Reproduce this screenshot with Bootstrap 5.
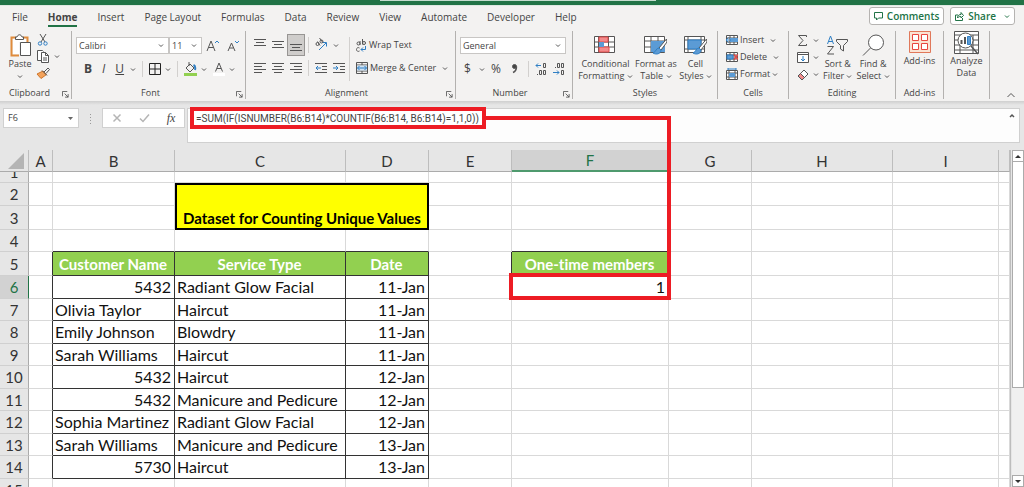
<!DOCTYPE html>
<html lang="en">
<head>
<meta charset="utf-8">
<meta name="viewport" content="width=device-width, initial-scale=1">
<title>Counting Unique Values</title>
<link rel="stylesheet" href="https://cdn.jsdelivr.net/npm/bootstrap@5.3.0/dist/css/bootstrap.min.css">
<style>
:root{--xl-green:#217346;--ink:#444;--line:#d9d9d9;--red:#ed1c24}
body{font-family:"Open Sans","Noto Sans",sans-serif;font-size:9px;line-height:12px;color:var(--ink);background:#e6e6e6;overflow:hidden}
button,input{font:inherit;color:inherit}
svg{display:block;flex:none;fill:none;stroke:#555;stroke-width:1}
.title-strip{height:5px;background:var(--xl-green);overflow:hidden}
.title-strip .search{width:276px;height:1px;margin-left:380px;background:#c5dccf}
.tabs-row{height:25px;background:#f3f2f1;padding:0 9px 0 12px;border-top:1px solid #dfe8e2}
.tabs-row .nav-link{font-size:10px;line-height:16px;color:var(--ink);padding:3px 0 0}
.tabs-row .nav-link.active{font-weight:700;border-bottom:2px solid var(--xl-green)}
.tabs-row .nav{gap:20px}
.pills{gap:6px;padding-top:1px}
.pill{height:18px;background:#fff;border:1px solid #b5b3b1;border-radius:3px;color:var(--xl-green);font-size:10px;font-weight:600;padding:0 4px}
.pill svg{stroke:var(--xl-green)}
.ribbon{height:71px;background:#f3f2f1}
.grp{height:68px;margin-top:1px;border-right:1px solid #b3b1af;flex:none;position:relative}
.grp .cap{height:12px;text-align:center}
.grp .launch{position:absolute;right:2px;bottom:1px}
.w-clip{width:72px}.w-font{width:174px}.w-align{width:210px}.w-num{width:117px}.w-styles{width:145px}.w-cells{width:71px}.w-edit{width:107px}.w-add{width:48px}.w-an{width:46px}
.top-s{padding-top:3px}
.rows3{display:flex;flex-direction:column;gap:5px}
.stack{display:flex;flex-direction:column;gap:7px;padding-top:6px}
.line{display:flex;align-items:center;gap:6px}
.stack .tool{min-height:16px}
.tool{background:none;border:0;padding:0;display:flex;align-items:center;gap:4px;white-space:nowrap}
.tool.tight{gap:2px}
.tool.big{flex-direction:column;gap:0}
.tool.big>svg:first-child{height:24px}
.tool.on{background:#cfcdcb;box-shadow:0 0 0 2px #cfcdcb,0 0 0 3px #979593}
.caret{display:inline-block;stroke:#555}
.field{background:#fff;border:1px solid #c8c6c4;height:17px}
.field input{border:0;padding:0 2px;width:100%;min-width:0;background:none;outline:0}
.f-name{width:93px}.f-size{width:33px}.f-num{width:106px}
.vr-l{width:1px;height:16px;background:#d2d0ce}
.vr-l.long{height:44px;margin:6px 6px 0 4px}
.glyph{font-size:12px;line-height:16px}
.under-ribbon{height:4px;background:linear-gradient(#cfcfcf,#e6e6e6)}
.fbar{height:34px;margin:3px 4px 8px 3px}
.fbox{height:20px;background:#fff;border:1px solid #d0d0d0}
.n-box{width:76px}.fx-box{width:83px}
.fx{font-family:"Liberation Serif",serif;font-size:12px}
.fedit{height:35px;background:#fdfdfd;border:1px solid #d0d0d0;margin-left:2px}
.formula{font-family:Roboto,sans-serif;font-size:10px;height:22px;width:296px;border:4px solid var(--red);margin:-2px 0 0 2px;padding:0 2px;background:#fff;color:#444;outline:0}
.grid{table-layout:fixed;width:100%;border-collapse:separate;border-spacing:0;font-family:Lato,"Open Sans",sans-serif;font-variant-ligatures:none;font-size:16px;line-height:20px;color:#111}
.grid td,.grid th{padding:0 3px 0 2px;border-right:1px solid var(--line);border-bottom:1px solid var(--line);white-space:nowrap;overflow:hidden;vertical-align:bottom;background:#fff}
.grid td{padding-bottom:1px}
.grid thead th,.grid tbody th{background:#e6e6e6;font-size:15px;font-weight:400;text-align:center;vertical-align:middle;color:#333;padding:0;line-height:18px}
.grid thead th{height:22px;border-right-color:#bdbdbd;border-bottom-color:#ababab}
.grid tbody th{border-right-color:#ababab;border-bottom-color:#d0d0d0}
.grid thead th.sel{background:#d2d2d2;color:var(--xl-green);border-bottom:2px solid #4f9a6e}
.grid tbody th.sel{background:#d2d2d2;color:var(--xl-green);border-right-color:var(--xl-green)}
.grid tbody tr{height:23px}
.grid tbody tr.short{height:22px}
.grid tbody tr.short td{line-height:20px;padding-bottom:0}
.grid tbody tr.tall{height:24px}
.grid tbody tr.cut{height:11px}
.cut th div{height:10px;line-height:1px;overflow:hidden}
.grid td.k{border-right-color:#333;border-bottom-color:#333}
.grid td.kr{border-right-color:#333}
.grid td.kb{border-bottom-color:#333}
.grid td.hd{background:#92d050;color:#fff;font-size:15px;font-weight:700;text-align:center}
.grid td.ttl{background:#ff0;border:2px solid #000;font-size:15px;font-weight:700;text-align:center;padding:0;color:#000}
.c-head{width:29px}.c-a{width:24px}.c-b{width:122px}.c-c{width:171px}.c-s{width:83px}.c-f{width:157px}.c-h{width:141px}.c-i{width:106px}
.scrollcol{width:16px;border-left:1px solid #bdbdbd;padding-left:1px}
.sb{width:12px;border:1px solid #ababab;background:#fff;height:12px;padding:0}
.sb.thumb{height:226px;border-top:0}
.track{width:12px;background:#f0f0f0}
.link-line{position:absolute;left:485px;top:116px;width:186px;height:159px;border:solid var(--red);border-width:4px 4px 0 0;pointer-events:none}
.cell-box{position:absolute;left:509px;top:273px;width:162px;height:27px;border:4px solid var(--red);pointer-events:none}
</style>
<script src="https://cdn.jsdelivr.net/npm/bootstrap@5.3.0/dist/js/bootstrap.bundle.min.js"></script>
</head>
<body class="vh-100 d-flex flex-column position-relative">
<svg width="0" height="0" class="position-absolute">
<symbol id="cv" viewBox="0 0 6 5"><path d="M1 1.5l2 2 2-2"/></symbol>
<symbol id="ln" viewBox="0 0 8 8"><path d="M.5 6V.5H6M3 3l4 4M7 3.5V7H3.5"/></symbol>
<symbol id="brush" viewBox="0 0 16 18"><path d="M15.5 1L8 10l2 2 6-8z" fill="#fff"/><path d="M8 10c-3 0-3 4-6 5 3 2 8 1 8-3z" fill="#5b9bd5" stroke="#2f7fc4"/></symbol>
</svg>

<header>
<div class="title-strip"><div class="search"></div></div>
<div class="tabs-row d-flex justify-content-between align-items-start">
<nav class="nav flex-nowrap text-nowrap">
<a class="nav-link" href="#">File</a><a class="nav-link active" href="#">Home</a><a class="nav-link" href="#">Insert</a><a class="nav-link" href="#">Page Layout</a><a class="nav-link" href="#">Formulas</a><a class="nav-link" href="#">Data</a><a class="nav-link" href="#">Review</a><a class="nav-link" href="#">View</a><a class="nav-link" href="#">Automate</a><a class="nav-link" href="#">Developer</a><a class="nav-link" href="#">Help</a>
</nav>
<div class="pills d-flex text-nowrap">
<button class="pill d-flex align-items-center gap-1"><svg width="9" height="9"><path d="M.5.5h8v5.500h-4l-2 2v-2h-2z"/></svg>Comments</button>
<button class="pill d-flex align-items-center gap-1"><svg width="9" height="9"><path d="M3 3H.5v5.500h7V6M2.500 6c0-3 2-3.500 3.500-3.500V.5l2.500 3L6 6V4.500C5 4.500 3.500 4.500 2.500 6z"/></svg>Share<svg class="ms-1" width="6" height="5"><use href="#cv"/></svg></button>
</div>
</div>

<div class="ribbon d-flex">
<section class="grp w-clip d-flex flex-column justify-content-between">
<div class="d-flex ps-2 gap-1 top-s">
<button class="tool big"><svg width="24" height="24"><path d="M8 3.500H3.500v18H11M15 3.500h4.500V8" stroke="#e08b3c" stroke-width="2"/><path d="M5 5h13v3h-7v12H5z" fill="#fff" stroke="none"/><path d="M7.500 5.500V3H9c1-3 4-3 5 0h1.500v2.500z" fill="#fff"/><path d="M12.500 8.500h10v13h-10z" fill="#fff"/></svg><span>Paste</span><svg class="mt-1" width="6" height="5"><use href="#cv"/></svg></button>
<div class="d-flex flex-column gap-1">
<button class="tool" aria-label="Cut"><svg width="14" height="12"><path d="M4 0l5 8M10 0L5 8"/><circle cx="4" cy="9.500" r="1.700" stroke="#2f7fc4"/><circle cx="9.500" cy="9.500" r="1.700" stroke="#2f7fc4"/></svg></button>
<button class="tool" aria-label="Copy"><svg width="14" height="13"><path d="M6 10.500H1.500V.5h5l1 1M5.500 2.500h4l3 3v7h-7z" fill="#fff"/><path d="M9.500 2.500v3h3M7 8h4M7 10h4"/></svg><svg width="6" height="5"><use href="#cv"/></svg></button>
<button class="tool" aria-label="Format painter"><svg width="14" height="12"><path d="M7 4l3.500 3.500L5 11.500 1 7z" fill="#f3a35c" stroke="#d0762a"/><path d="M6 3.500l5 5M8 5l4-4 1.500 1.500L10 6.500"/></svg></button>
</div></div>
<div class="cap pe-3 ps-1">Clipboard</div><svg class="launch" width="7" height="7"><use href="#ln"/></svg>
</section>

<section class="grp w-font d-flex flex-column justify-content-between">
<div class="stack ps-1">
<div class="d-flex align-items-center">
<div class="field f-name d-flex align-items-center pe-1"><input aria-label="Font" value="Calibri"><svg width="6" height="5"><use href="#cv"/></svg></div>
<div class="field f-size d-flex align-items-center pe-1"><input aria-label="Font size" value="11"><svg width="6" height="5"><use href="#cv"/></svg></div>
<button class="tool ps-1" aria-label="Grow font"><svg width="13" height="14"><path d="M1 12L5 2l4 10M2.500 8.500h5"/><path d="M9 4l2-2 2 2" stroke="#2f7fc4"/></svg></button>
<button class="tool ps-2" aria-label="Shrink font"><svg width="12" height="14"><path d="M1 12l3.500-8L8 12M2.500 9h4"/><path d="M8 2l2 2 2-2" stroke="#2f7fc4"/></svg></button>
</div>
<div class="line ps-2">
<button class="tool fw-bold glyph">B</button>
<button class="tool fst-italic glyph px-1">I</button>
<button class="tool text-decoration-underline glyph">U</button><svg width="6" height="5"><use href="#cv"/></svg>
<span class="vr-l"></span>
<button class="tool" aria-label="Borders"><svg width="12" height="12"><path d="M.5.5h11v11H.5zM6 0v12M0 6h12" stroke="#222"/></svg><svg width="6" height="5"><use href="#cv"/></svg></button>
<span class="vr-l"></span>
<button class="tool" aria-label="Fill colour"><svg width="13" height="14"><path d="M2 6l4-4 4 4-4 4zM5 0v4"/><path d="M9.500 3c2 1 2 3 1.500 5" stroke="#2f7fc4" stroke-width="2"/><path d="M0 12.500h13" stroke="#92d050" stroke-width="3"/></svg><svg width="6" height="5"><use href="#cv"/></svg></button>
<button class="tool" aria-label="Font colour"><svg width="12" height="14"><path d="M2.500 9.500L6 1l3.500 8.500M4 6.500h4"/><path d="M0 12.500h12" stroke="#fff" stroke-width="3"/></svg><svg width="6" height="5"><use href="#cv"/></svg></button>
</div></div>
<div class="cap pe-3">Font</div><svg class="launch" width="7" height="7"><use href="#ln"/></svg>
</section>

<section class="grp w-align d-flex flex-column justify-content-between">
<div class="d-flex ps-2">
<div class="stack">
<div class="line">
<button class="tool" aria-label="Top align"><svg width="12" height="16"><path d="M0 2.500h12M2 5.500h8M0 8.500h12"/></svg></button>
<button class="tool" aria-label="Middle align"><svg width="12" height="16"><path d="M0 4.500h12M2 7.500h8M0 10.500h12"/></svg></button>
<button class="tool on" aria-label="Bottom align"><svg width="12" height="16"><path d="M0 7.500h12M2 10.500h8M0 13.500h12"/></svg></button>
<span class="vr-l"></span>
<button class="tool" aria-label="Orientation"><svg width="14" height="14"><path d="M4 12l7-7M7.500 4.500H11.500v4" stroke="#2f7fc4"/><circle cx="2.500" cy="6" r="1.500"/><circle cx="6.500" cy="3.500" r="1.500"/><path d="M2.500 3.500l2.500 4M4.500 0l3 4"/></svg><svg width="6" height="5"><use href="#cv"/></svg></button>
</div>
<div class="line">
<button class="tool" aria-label="Align left"><svg width="12" height="12"><path d="M0 1.500h12M0 4.500h8M0 7.500h12M0 10.500h8"/></svg></button>
<button class="tool" aria-label="Centre"><svg width="12" height="12"><path d="M0 1.500h12M2 4.500h8M0 7.500h12M2 10.500h8"/></svg></button>
<button class="tool" aria-label="Align right"><svg width="12" height="12"><path d="M0 1.500h12M4 4.500h8M0 7.500h12M4 10.500h8"/></svg></button>
<span class="vr-l"></span>
<button class="tool" aria-label="Decrease indent"><svg width="12" height="12"><path d="M0 1.500h12M7 4.500h5M7 7.500h5M0 10.500h12"/><path d="M6 6H1M3 4L1 6l2 2" stroke="#2f7fc4"/></svg></button>
<button class="tool" aria-label="Increase indent"><svg width="12" height="12"><path d="M0 1.500h12M7 4.500h5M7 7.500h5M0 10.500h12"/><path d="M0 6h5M3 4l2 2-2 2" stroke="#2f7fc4"/></svg></button>
</div></div>
<span class="vr-l long"></span>
<div class="stack">
<button class="tool tight"><svg width="11" height="14"><path d="M4 3v4M9.500 5a1.500 1.500 0 1 1-3 0 1.500 1.500 0 1 1 3 0M6.500 1v5.500M4 5.500a1.500 1.500 0 1 1-3 0 1.500 1.500 0 1 1 3 0M3.500 10C2 9 .5 10 .5 11.500S2 14 3.500 13"/><path d="M9.500 8v3.500H5M7 9.500l-2 2 2 2" stroke="#2f7fc4"/></svg>Wrap Text</button>
<button class="tool tight"><svg width="12" height="12"><path d="M.5.5h11v11H.5zM0 3h12M0 9h12M6 0v3M6 9v3"/><path d="M1 3.500h10v5H1z" fill="#cfe3f5" stroke="none"/><path d="M1.500 6h9M3.500 4l-2 2 2 2M8.500 4l2 2-2 2" stroke="#2f7fc4"/></svg>Merge &amp; Center<svg class="ms-1" width="6" height="5"><use href="#cv"/></svg></button>
</div></div>
<div class="cap pe-2">Alignment</div><svg class="launch" width="7" height="7"><use href="#ln"/></svg>
</section>

<section class="grp w-num d-flex flex-column justify-content-between">
<div class="stack ps-1">
<div class="field f-num d-flex align-items-center pe-1"><input aria-label="Number format" value="General"><svg width="6" height="5"><use href="#cv"/></svg></div>
<div class="line ps-1">
<button class="tool glyph">$<svg class="ms-1" width="6" height="5"><use href="#cv"/></svg></button>
<button class="tool glyph">%</button>
<button class="tool px-1" aria-label="Comma style"><svg width="7" height="12"><circle cx="3.500" cy="3.500" r="2" fill="#444"/><path d="M5.500 3.500c0 3-1 5-3.500 6" stroke-width="1.500"/></svg></button>
<span class="vr-l"></span>
<button class="tool" aria-label="Increase decimal"><svg width="12" height="14"><path d="M6 3.500H1M3 1.500l-2 2 2 2" stroke="#2f7fc4"/><path d="M8.500 1.500h2v4h-2zM4.500 8.500h2v4h-2zM8.500 8.500h2v4h-2zM2 12.500h1"/></svg></button>
<button class="tool" aria-label="Decrease decimal"><svg width="12" height="14"><path d="M0 10.500h6M4 8.500l2 2-2 2" stroke="#2f7fc4"/><path d="M4.500 1.500h2v4h-2zM8.500 1.500h2v4h-2zM8.500 8.500h2v4h-2zM2 5.500h1"/></svg></button>
</div></div>
<div class="cap pe-2">Number</div><svg class="launch" width="7" height="7"><use href="#ln"/></svg>
</section>

<section class="grp w-styles d-flex flex-column justify-content-between">
<div class="d-flex justify-content-around top-s px-1">
<button class="tool big"><svg width="22" height="24"><path d="M.5 2.500h20v16H.5zM0 8h21M0 13h21M4.500 2v16M14.500 2v16" fill="#fff"/><path d="M5 3h9v5H5zM5 13h10v5H5z" fill="#f28b8b" stroke="#e04b4b"/><path d="M5 8h5v5H5z" fill="#5b9bd5" stroke="none"/></svg><span>Conditional<br>Formatting <svg class="caret" width="6" height="5"><use href="#cv"/></svg></span></button>
<button class="tool big"><svg width="24" height="24"><path d="M.5 2.500h20v16H.5zM0 7h21M0 13h21M7 2v16M14 2v16" fill="#fff"/><path d="M7 7h14v11H7z" fill="#5b9bd5" stroke="none"/><use href="#brush" x="7" y="4" width="16" height="18"/></svg><span>Format as<br>Table <svg class="caret" width="6" height="5"><use href="#cv"/></svg></span></button>
<button class="tool big"><svg width="24" height="24"><path d="M.5 2.500h20v16H.5zM0 6h21M0 15h21M4 2v16M17 2v16" fill="#fff"/><path d="M4 6h13v9H4z" fill="#5b9bd5" stroke="#2f7fc4"/><use href="#brush" x="7" y="4" width="16" height="18"/></svg><span>Cell<br>Styles <svg class="caret" width="6" height="5"><use href="#cv"/></svg></span></button>
</div>
<div class="cap">Styles</div>
</section>

<section class="grp w-cells d-flex flex-column justify-content-between">
<div class="rows3 ps-2 top-s">
<button class="tool tight"><svg width="12" height="10"><path d="M.5.500h11v9H.5zM0 3h12M0 7h12M4 0v10M8 0v10" fill="#fff"/><path d="M4 3h8v4H4z" fill="#5b9bd5" stroke="none"/><path d="M5 5H0M2.500 2.500L0 5l2.500 2.500" stroke="#2f7fc4"/></svg>Insert<svg class="ms-1" width="6" height="5"><use href="#cv"/></svg></button>
<button class="tool tight"><svg width="12" height="10"><path d="M.5.500h11v9H.5zM0 3h12M0 7h12M4 0v10M8 0v10" fill="#fff"/><path d="M1 3h6v4H1z" fill="#5b9bd5" stroke="#2f7fc4"/><path d="M8 2.500l4 5M12 2.500l-4 5" stroke="#e04b4b" stroke-width="1.500"/></svg>Delete<svg class="ms-1" width="6" height="5"><use href="#cv"/></svg></button>
<button class="tool tight"><svg width="12" height="12"><path d="M.5 2.500h11v9H.5zM0 5h12M0 9h12M3 2v9M9 2v9" fill="#fff"/><path d="M3 5h6v4H3z" fill="#5b9bd5" stroke="none"/><path d="M2 1h8M2 0v2M10 0v2" stroke="#2f7fc4"/></svg>Format<svg width="6" height="5"><use href="#cv"/></svg></button>
</div>
<div class="cap">Cells</div>
</section>

<section class="grp w-edit d-flex flex-column justify-content-between">
<div class="d-flex gap-1 ps-2 top-s">
<div class="d-flex flex-column gap-1">
<button class="tool" aria-label="AutoSum"><svg width="12" height="13"><path d="M9.500 3V1.500h-8L6 6.500l-4.500 5h8V10"/></svg><svg width="6" height="5"><use href="#cv"/></svg></button>
<button class="tool" aria-label="Fill"><svg width="12" height="13"><path d="M.5 1.500h11v10H.5zM0 3.500h12" fill="#fff"/><path d="M6 5v5M4 8l2 2 2-2" stroke="#2f7fc4"/></svg><svg width="6" height="5"><use href="#cv"/></svg></button>
<button class="tool" aria-label="Clear"><svg width="12" height="13"><path d="M1 8l6-6 4 4-6 6z" fill="#fff"/><path d="M1 8l2.500-2.500 4 4L5 12z" fill="#f28b8b"/></svg><svg width="6" height="5"><use href="#cv"/></svg></button>
</div>
<button class="tool big"><svg width="23" height="24"><path d="M1.500 10L4.500 2l3 8M2.500 7.500h4" stroke="#2f7fc4"/><path d="M1.500 12.500h6L1.500 20h6.500M10.500 5.500h11v2l-4 4V17l-3-2v-3.500l-4-4z"/></svg><span>Sort &amp;<br>Filter <svg class="caret" width="6" height="5"><use href="#cv"/></svg></span></button>
<button class="tool big"><svg width="23" height="24"><circle cx="14" cy="8.500" r="7.500" fill="#fff"/><path d="M8.500 14L1 21.500"/></svg><span>Find &amp;<br>Select <svg class="caret" width="6" height="5"><use href="#cv"/></svg></span></button>
</div>
<div class="cap">Editing</div>
</section>

<section class="grp w-add d-flex flex-column justify-content-between">
<button class="tool big top-s"><svg width="22" height="24"><path d="M.5.5h21v21H.5z" fill="#fbe3d3" stroke="#e0785a"/><path d="M3.500 3.500h6v6h-6zM12.500 3.500h6v6h-6zM3.500 12.500h6v6h-6zM12.500 12.500h6v6h-6z" fill="#fff" stroke="#e8473f"/></svg><span>Add-ins</span></button>
<div class="cap">Add-ins</div>
</section>
<section class="grp w-an">
<button class="tool big top-s w-100"><svg width="25" height="24"><path d="M.5.5h24v22H.5zM0 4h25M0 9h25M0 14h25M0 19h25M6 4v18M19 4v18" fill="#fff"/><circle cx="11.500" cy="9.500" r="7.500" fill="#fff"/><path d="M17 15l7 8" stroke-width="1.500"/><path d="M7.500 9v4M11 6v7" stroke-width="2"/><path d="M13.500 5.500h3v8h-3z" fill="#5b9bd5" stroke="#2f7fc4"/></svg><span>Analyze<br>Data</span></button>
</section>
<button class="tool ms-auto align-self-end me-2" aria-label="Collapse ribbon"><svg width="10" height="12"><path d="M1.500 8L5 4.500 8.500 8"/></svg></button>
</div>
<div class="under-ribbon"></div>
</header>

<div class="fbar d-flex align-items-start">
<div class="fbox n-box d-flex align-items-center pe-1"><input class="border-0 bg-transparent w-100 px-1" aria-label="Name box" value="F6"><svg width="7" height="5"><path d="M1 1h5L3.500 4z" fill="#666" stroke="none"/></svg></div>
<svg class="mx-2" width="7" height="20"><path d="M3.500 6v11" stroke-dasharray="1 2" stroke="#999"/></svg>
<div class="fbox fx-box d-flex align-items-center justify-content-around">
<button class="tool" aria-label="Cancel"><svg width="10" height="10"><path d="M1.500 1.500l7 7M8.500 1.500l-7 7" stroke="#b5b5b5" stroke-width="1.500"/></svg></button>
<button class="tool" aria-label="Enter"><svg width="11" height="10"><path d="M1 5.500L4 8.500 10 1.500" stroke="#b5b5b5" stroke-width="1.500"/></svg></button>
<button class="tool fst-italic fx">fx</button>
</div>
<div class="fedit flex-grow-1 d-flex align-items-start justify-content-between">
<input class="formula" aria-label="Formula" value="=SUM(IF(ISNUMBER(B6:B14)*COUNTIF(B6:B14, B6:B14)=1,1,0))">
<button class="tool m-1" aria-label="Collapse formula bar"><svg width="6" height="6"><path d="M1 4l2-2 2 2" stroke-width="1.500"/></svg></button>
</div>
</div>

<main class="d-flex flex-grow-1 overflow-hidden">
<div class="flex-grow-1 overflow-hidden">
<table class="grid">
<colgroup><col class="c-head"><col class="c-a"><col class="c-b"><col class="c-c"><col class="c-s"><col class="c-s"><col class="c-f"><col class="c-s"><col class="c-h"><col class="c-i"><col></colgroup>
<thead><tr><th><svg class="ms-auto me-1" width="16" height="16"><path d="M16 0v16H0z" fill="#b4b4b4" stroke="none"/></svg></th><th>A</th><th>B</th><th>C</th><th>D</th><th>E</th><th class="sel">F</th><th>G</th><th>H</th><th>I</th><th></th></tr></thead>
<tbody>
<tr class="cut"><th><div>1</div></th><td></td><td></td><td></td><td></td><td></td><td></td><td></td><td></td><td></td><td></td></tr>
<tr><th>2</th><td></td><td></td><td class="ttl" colspan="2" rowspan="2">Dataset for Counting Unique Values</td><td></td><td></td><td></td><td></td><td></td><td></td></tr>
<tr class="tall"><th>3</th><td></td><td></td><td></td><td></td><td></td><td></td><td></td><td></td></tr>
<tr class="short"><th>4</th><td></td><td class="kb"></td><td class="kb"></td><td class="kb"></td><td></td><td class="kb"></td><td></td><td></td><td></td><td></td></tr>
<tr class="tall"><th>5</th><td class="kr"></td><td class="k hd">Customer Name</td><td class="k hd">Service Type</td><td class="k hd">Date</td><td class="kr"></td><td class="k hd">One-time members</td><td></td><td></td><td></td><td></td></tr>
<tr><th class="sel">6</th><td class="kr"></td><td class="k text-end">5432</td><td class="k">Radiant Glow Facial</td><td class="k text-end">11-Jan</td><td></td><td class="text-end">1</td><td></td><td></td><td></td><td></td></tr>
<tr class="short"><th>7</th><td class="kr"></td><td class="k">Olivia Taylor</td><td class="k">Haircut</td><td class="k text-end">11-Jan</td><td></td><td></td><td></td><td></td><td></td><td></td></tr>
<tr><th>8</th><td class="kr"></td><td class="k">Emily Johnson</td><td class="k">Blowdry</td><td class="k text-end">11-Jan</td><td></td><td></td><td></td><td></td><td></td><td></td></tr>
<tr class="short"><th>9</th><td class="kr"></td><td class="k">Sarah Williams</td><td class="k">Haircut</td><td class="k text-end">11-Jan</td><td></td><td></td><td></td><td></td><td></td><td></td></tr>
<tr><th>10</th><td class="kr"></td><td class="k text-end">5432</td><td class="k">Haircut</td><td class="k text-end">12-Jan</td><td></td><td></td><td></td><td></td><td></td><td></td></tr>
<tr class="short"><th>11</th><td class="kr"></td><td class="k text-end">5432</td><td class="k">Manicure and Pedicure</td><td class="k text-end">12-Jan</td><td></td><td></td><td></td><td></td><td></td><td></td></tr>
<tr><th>12</th><td class="kr"></td><td class="k">Sophia Martinez</td><td class="k">Radiant Glow Facial</td><td class="k text-end">12-Jan</td><td></td><td></td><td></td><td></td><td></td><td></td></tr>
<tr class="short"><th>13</th><td class="kr"></td><td class="k">Sarah Williams</td><td class="k">Manicure and Pedicure</td><td class="k text-end">13-Jan</td><td></td><td></td><td></td><td></td><td></td><td></td></tr>
<tr><th>14</th><td class="kr"></td><td class="k text-end">5730</td><td class="k">Haircut</td><td class="k text-end">13-Jan</td><td></td><td></td><td></td><td></td><td></td><td></td></tr>
<tr><th>15</th><td></td><td></td><td></td><td></td><td></td><td></td><td></td><td></td><td></td><td></td></tr>
</tbody>
</table>
</div>
<div class="scrollcol d-flex flex-column">
<button class="sb" aria-label="Scroll up"><svg width="10" height="8"><path d="M2 6h6L5 3z" fill="#333" stroke="none"/></svg></button>
<div class="sb thumb"></div>
<div class="track flex-grow-1"></div>
<button class="sb" aria-label="Scroll down"><svg width="10" height="8"><path d="M2 3h6L5 6z" fill="#333" stroke="none"/></svg></button>
</div>
</main>
<div class="link-line"></div>
<div class="cell-box"></div>
</body>
</html>
